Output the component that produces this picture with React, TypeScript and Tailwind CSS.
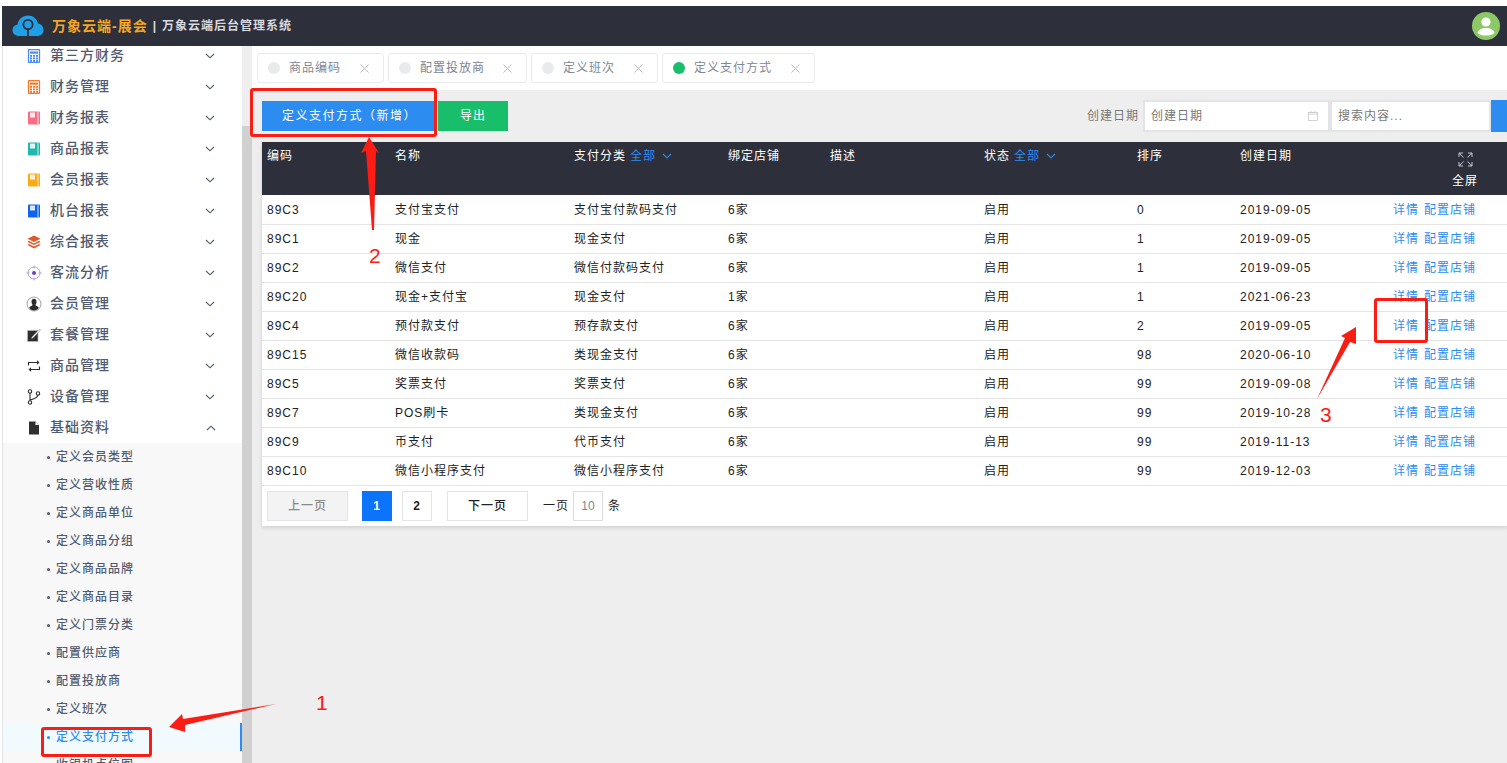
import React from "react";

const Chevron = ({ up = false, cls = "text-[#515a6e]" }: { up?: boolean; cls?: string }) => (
  <svg width="10" height="6" viewBox="0 0 10 6" fill="none" className={cls}>
    <path d={up ? "M1 5L5 1.2L9 5" : "M1 1L5 4.8L9 1"} stroke="currentColor" strokeWidth="1.1" />
  </svg>
);

const Calc = ({ c }: { c: string }) => (
  <svg width="14" height="14" viewBox="0 0 14 14">
    <rect x="1.5" y="0.5" width="11" height="13" rx="1" fill="none" stroke={c} strokeWidth="1.3" />
    <rect x="3" y="2.5" width="8" height="2.2" fill={c} />
    {[3, 6, 9].map((x) => [6, 8.5, 11].map((y) => <rect key={`${x}-${y}`} x={x} y={y} width="2" height="1.8" fill={c} />))}
  </svg>
);
const Book = ({ c }: { c: string }) => (
  <svg width="14" height="14" viewBox="0 0 14 14">
    <rect x="1" y="0.5" width="12" height="13" rx="1" fill={c} />
    <rect x="3" y="1.5" width="5" height="5" fill="#fff" opacity="0.85" />
    <rect x="10.5" y="0.5" width="1" height="13" fill="#fff" opacity="0.8" />
  </svg>
);
const Layers = () => (
  <svg width="14" height="14" viewBox="0 0 14 14" fill="#dd5a2b">
    <path d="M7 0.5L13.5 3.8L7 7L0.5 3.8Z" />
    <path d="M1.8 5.8L7 8.4L12.2 5.8L13.5 6.9L7 10.1L0.5 6.9Z" />
    <path d="M1.8 9L7 11.5L12.2 9L13.5 10.1L7 13.5L0.5 10.1Z" />
  </svg>
);
const Target = () => (
  <svg width="16" height="16" viewBox="0 0 16 16" fill="none">
    <circle cx="8" cy="8" r="6" stroke="#a99bd8" strokeWidth="0.9" />
    <path d="M8 0.5V3.5M8 12.5V15.5M0.5 8H3.5M12.5 8H15.5" stroke="#a99bd8" strokeWidth="0.9" />
    <circle cx="8" cy="8" r="2" fill="#6a3fc4" />
  </svg>
);
const UserC = () => (
  <svg width="16" height="16" viewBox="0 0 16 16">
    <circle cx="8" cy="8" r="7" fill="#fff" stroke="#8a8a8a" strokeWidth="0.8" />
    <path d="M8 2.8C6.2 2.8 5.5 4.2 5.5 5.7C5.5 7 6 8 6.6 8.8C6.6 9.8 4 10.2 3.2 11.8C4.3 13.6 6 14.6 8 14.6C10 14.6 11.7 13.6 12.8 11.8C12 10.2 9.4 9.8 9.4 8.8C10 8 10.5 7 10.5 5.7C10.5 4.2 9.8 2.8 8 2.8Z" fill="#2b2b2b" />
  </svg>
);
const Edit = () => (
  <svg width="14" height="14" viewBox="0 0 14 14">
    <rect x="0.5" y="2.5" width="10.5" height="11" fill="#2f2f2f" stroke="#bbb" strokeWidth="0.6" />
    <path d="M5 9L12.5 1L13.5 2L6 10L4.5 10.5Z" fill="#fff" stroke="#888" strokeWidth="0.6" />
  </svg>
);
const Repeat = () => (
  <svg width="14" height="14" viewBox="0 0 14 14" fill="none" stroke="#2f2f2f" strokeWidth="1.1">
    <path d="M1.5 6.5V3.5H11" />
    <path d="M10 1.2L12.5 3.5L10 5.8" fill="#2f2f2f" stroke="none" />
    <path d="M12.5 7.5V10.5H3" />
    <path d="M4 8.2L1.5 10.5L4 12.8" fill="#2f2f2f" stroke="none" />
  </svg>
);
const Branch = () => (
  <svg width="14" height="16" viewBox="0 0 14 16" fill="none" stroke="#2f2f2f" strokeWidth="1.1">
    <circle cx="3" cy="2.5" r="1.7" />
    <circle cx="3" cy="13.5" r="1.7" />
    <circle cx="11" cy="4.5" r="1.7" />
    <path d="M3 4.2V11.8M3 11C7 10 10.5 9 11 6.2" />
  </svg>
);
const FileI = () => (
  <svg width="12" height="14" viewBox="0 0 12 14">
    <path d="M1 0.5H7.5L11 4V13.5H1Z" fill="#2f2f2f" />
    <path d="M7.5 0.5V4H11" fill="#fff" />
  </svg>
);

const menu: [string, React.ReactNode][] = [
  ["第三方财务", <Calc c="#4a8af4" />],
  ["财务管理", <Calc c="#f5782a" />],
  ["财务报表", <Book c="#fb6c85" />],
  ["商品报表", <Book c="#1fb8ac" />],
  ["会员报表", <Book c="#fbab15" />],
  ["机台报表", <Book c="#0f62f0" />],
  ["综合报表", <Layers />],
  ["客流分析", <Target />],
  ["会员管理", <UserC />],
  ["套餐管理", <Edit />],
  ["商品管理", <Repeat />],
  ["设备管理", <Branch />],
];

const sub = ["定义会员类型", "定义营收性质", "定义商品单位", "定义商品分组", "定义商品品牌", "定义商品目录", "定义门票分类", "配置供应商", "配置投放商", "定义班次", "定义支付方式", "收银机点位图"];

const rows = [
  ["89C3", "支付宝支付", "支付宝付款码支付", "6家", "启用", "0", "2019-09-05"],
  ["89C1", "现金", "现金支付", "6家", "启用", "1", "2019-09-05"],
  ["89C2", "微信支付", "微信付款码支付", "6家", "启用", "1", "2019-09-05"],
  ["89C20", "现金+支付宝", "现金支付", "1家", "启用", "1", "2021-06-23"],
  ["89C4", "预付款支付", "预存款支付", "6家", "启用", "2", "2019-09-05"],
  ["89C15", "微信收款码", "类现金支付", "6家", "启用", "98", "2020-06-10"],
  ["89C5", "奖票支付", "奖票支付", "6家", "启用", "99", "2019-09-08"],
  ["89C7", "POS刷卡", "类现金支付", "6家", "启用", "99", "2019-10-28"],
  ["89C9", "币支付", "代币支付", "6家", "启用", "99", "2019-11-13"],
  ["89C10", "微信小程序支付", "微信小程序支付", "6家", "启用", "99", "2019-12-03"],
];

const grid = "grid grid-cols-[128px_179px_154px_102px_154px_153px_103px_154px_1fr] pl-[5px]";

const tabs = [
  ["商品编码", "w-[127px]", "bg-[#e8eaec]", "mr-[4px]"],
  ["配置投放商", "w-[139px]", "bg-[#e8eaec]", "mr-[4px]"],
  ["定义班次", "w-[127px]", "bg-[#e8eaec]", "mr-[4px]"],
  ["定义支付方式", "w-[153px]", "bg-[#19be6b]", ""],
];

export default function App() {
  return (
    <div className="relative h-screen w-full overflow-hidden bg-white pt-[6px] [font-family:'Liberation_Sans','Noto_Sans_CJK_SC',sans-serif] text-[12px] tracking-[1px] text-[#333]">
      {/* Header */}
      <header className="ml-[2px] flex h-[40px] items-center bg-[#2d303b]">
        <svg width="32" height="24" viewBox="0 0 32 24" className="ml-[10px]">
          <path d="M7 22C3 22 0.5 19.5 0.5 16C0.5 13 2.5 11 5.5 10.5C6.5 5 10.5 1.5 16 1.5C21 1.5 25 5 26 9.5C29.5 10 31.5 12.8 31.5 16C31.5 19.5 29 22 25.5 22Z" fill="#1f9fe6" />
          <circle cx="16" cy="10.5" r="4.6" fill="none" stroke="#2d303b" strokeWidth="1.8" />
          <path d="M16 15V22" stroke="#2d303b" strokeWidth="1.8" />
        </svg>
        <span className="ml-[8px] text-[14px] font-bold text-[#f5a623]">万象云端-展会</span>
        <span className="ml-[5px] font-bold text-[#d8dae0]">|</span>
        <span className="ml-[5px] font-bold text-[#d8dae0]">万象云端后台管理系统</span>
        <svg width="28" height="28" viewBox="0 0 28 28" className="ml-auto mr-[7px]">
          <circle cx="14" cy="14" r="14" fill="#8cc866" />
          <circle cx="14" cy="10" r="4.6" fill="#fff" />
          <path d="M5.5 21C6.5 17.5 9.5 16 14 16C18.5 16 21.5 17.5 22.5 21C20 23 17.5 23.6 14 23.6C10.5 23.6 8 23 5.5 21Z" fill="#fff" />
        </svg>
      </header>

      <div className="flex h-[717px]">
        {/* Sidebar */}
        <aside className="ml-[2px] h-full w-[240px] overflow-hidden border-l border-[#e4e4e4] bg-white text-[#515a6e]">
          <div className="mt-[-6px]">
            {menu.map(([name, icon]) => (
              <div key={name} className="flex h-[31px] items-center text-[14px] font-medium">
                <span className="flex w-[47px] shrink-0 items-center justify-center pl-[16px] pr-[1px]">{icon}</span>
                <span>{name}</span>
                <span className="ml-auto mr-[27px] flex"><Chevron /></span>
              </div>
            ))}
            <div className="flex h-[31px] items-center text-[14px] font-medium">
              <span className="flex w-[47px] shrink-0 items-center justify-center pl-[16px] pr-[1px]"><FileI /></span>
              <span>基础资料</span>
              <span className="ml-auto mr-[26px] flex"><Chevron up /></span>
            </div>
            <div className="bg-[#f8f8f9]">
              {sub.map((s) => {
                const on = s === "定义支付方式";
                return (
                  <div key={s} className={`flex h-[28px] items-center font-medium ${on ? "border-r-2 border-[#2d8cf0] bg-[#f0faff] text-[#2d8cf0]" : ""}`}>
                    <span className={`ml-[44px] h-[3px] w-[3px] rounded-full ${on ? "bg-[#2d8cf0]" : "bg-[#515a6e]"}`} />
                    <span className="ml-[6px]">{s}</span>
                  </div>
                );
              })}
            </div>
          </div>
        </aside>

        {/* Scrollbar */}
        <div className="flex h-full w-[10px] flex-col bg-[#eeeeee]">
          <div className="h-[80px] shrink-0" />
          <div className="flex-1 bg-[#d0d0d0]" />
        </div>

        {/* Main */}
        <main className="h-full min-w-0 flex-1 bg-[#eeeeee]">
          <div className="flex h-[44px] items-start bg-white pl-[5px] pt-[7px]">
            {tabs.map(([t, w, dot, mr]) => (
              <div key={t} className={`flex h-[30px] items-center rounded-[3px] border border-[#e8eaec] bg-white text-[#808695] ${w} ${mr}`}>
                <span className={`ml-[10px] h-[12px] w-[12px] rounded-full ${dot}`} />
                <span className="ml-[9px]">{t}</span>
                <svg width="9" height="9" viewBox="0 0 9 9" className="ml-auto mr-[14px] text-[#b5b8c0]">
                  <path d="M0.5 0.5L8.5 8.5M8.5 0.5L0.5 8.5" stroke="currentColor" strokeWidth="0.9" />
                </svg>
              </div>
            ))}
          </div>

          <div className="pl-[10px]">
            <div className="flex h-[32px] mt-[10px] items-center">
              <button className="h-[30px] w-[172px] bg-[#2d8cf0] pl-[3px] tracking-[1.5px] text-white">定义支付方式（新增）</button>
              <button className="ml-[4px] h-[30px] w-[70px] bg-[#19be6b] text-white">导出</button>
              <span className="ml-auto text-[#777]">创建日期</span>
              <div className="ml-[4px] flex h-[32px] w-[187px] items-center border-2 border-[#e3e4e8] bg-white pl-[6px] text-[#777]">
                <span>创建日期</span>
                <svg width="10" height="10" viewBox="0 0 10 10" fill="none" className="ml-auto mr-[10px]" stroke="#c5c8ce" strokeWidth="0.8">
                  <rect x="0.5" y="1.5" width="9" height="8" />
                  <path d="M0.5 3H9.5M3 0V2M7 0V2" />
                </svg>
              </div>
              <div className="flex h-[32px] w-[161px] items-center border-2 border-[#e3e4e8] bg-white pl-[6px] text-[#777]">搜索内容...</div>
              <div className="h-[32px] w-[16px] bg-[#2d8cf0]" />
            </div>

            <div className="mt-[10px] bg-white shadow-[0_2px_4px_rgba(0,0,0,0.12)]">
              <div className={`${grid} h-[53px] bg-[#2d303b] pt-[5px] text-white`}>
                <span>编码</span>
                <span>名称</span>
                <span className="flex h-[18px] items-center">支付分类<span className="ml-[4px] mr-[6px] text-[#2d8cf0]">全部</span><Chevron cls="text-[#2d8cf0]" /></span>
                <span>绑定店铺</span>
                <span>描述</span>
                <span className="flex h-[18px] items-center">状态<span className="ml-[4px] mr-[6px] text-[#2d8cf0]">全部</span><Chevron cls="text-[#2d8cf0]" /></span>
                <span>排序</span>
                <span>创建日期</span>
                <span className="ml-[63px] flex w-[26px] -translate-x-[5px] flex-col items-center">
                  <svg width="15" height="15" viewBox="0 0 15 15" fill="none" stroke="#d5d7dd" strokeWidth="0.9" className="mt-[5px]">
                    <path d="M1 5V1H5M1 1L5.5 5.5M10 1H14V5M14 1L9.5 5.5M1 10V14H5M1 14L5.5 9.5M14 10V14H10M14 14L9.5 9.5" />
                  </svg>
                  <span className="mt-[5px] whitespace-nowrap">全屏</span>
                </span>
              </div>
              <div className="pt-[1px]">
                {rows.map((r) => (
                  <div key={r[0]} className={`${grid} h-[29px] items-center border-b border-[#e5e5e5] text-[#222]`}>
                    <span>{r[0]}</span>
                    <span>{r[1]}</span>
                    <span>{r[2]}</span>
                    <span>{r[3]}</span>
                    <span />
                    <span>{r[4]}</span>
                    <span>{r[5]}</span>
                    <span>{r[6]}</span>
                    <span className="-ml-[1px] whitespace-nowrap text-[#2d8cf0]">详情<span className="ml-[5px]">配置店铺</span></span>
                  </div>
                ))}
              </div>
              <div className="flex h-[40px] items-center pl-[5px] text-[#222]">
                <button className="h-[30px] w-[81px] border border-[#e3e4e8] bg-[#f3f3f3] font-medium text-[#8a8a8a]">上一页</button>
                <button className="ml-[14px] h-[30px] w-[30px] bg-[#0b74fb] font-bold text-white">1</button>
                <button className="ml-[10px] h-[30px] w-[30px] border border-[#e3e4e8] font-bold">2</button>
                <button className="ml-[15px] h-[30px] w-[81px] border border-[#e3e4e8] font-medium">下一页</button>
                <span className="ml-[15px]">一页</span>
                <span className="ml-[4px] flex h-[30px] w-[30px] items-center justify-center border border-[#dcdee2] tracking-normal text-[#808695]">10</span>
                <span className="ml-[5px]">条</span>
              </div>
            </div>
          </div>
        </main>
      </div>

      {/* Annotations drawn on top of the screenshot */}
      <div className="absolute left-[250px] top-[88px] h-[49px] w-[187px] rounded-[3px] border-[3px] border-[#fb1c14]" />
      <div className="absolute left-[1374px] top-[298px] h-[45px] w-[54px] rounded-[3px] border-[3px] border-[#fb1c14]" />
      <div className="absolute left-[41px] top-[727px] h-[30px] w-[111px] rounded-[3px] border-[3px] border-[#fb1c14]" />
      <svg className="pointer-events-none absolute left-0 top-0" width="1507" height="763" fill="#fb1c14">
        <polygon points="276,704 183,719 182,714 169,727 185,732 185,725" />
        <polygon points="369,137 379,153 376,151 374,230 372,230 366,151 361,153" />
        <polygon points="1317,399 1345,338 1341,336 1356,327 1356,344 1350,342" />
      </svg>
      <span className="absolute left-[316px] top-[690px] text-[21px] font-light leading-[26px] tracking-normal text-[#fb1c14]">1</span>
      <span className="absolute left-[369px] top-[243px] text-[21px] font-light leading-[26px] tracking-normal text-[#fb1c14]">2</span>
      <span className="absolute left-[1320px] top-[402px] text-[21px] font-light leading-[26px] tracking-normal text-[#fb1c14]">3</span>
    </div>
  );
}
